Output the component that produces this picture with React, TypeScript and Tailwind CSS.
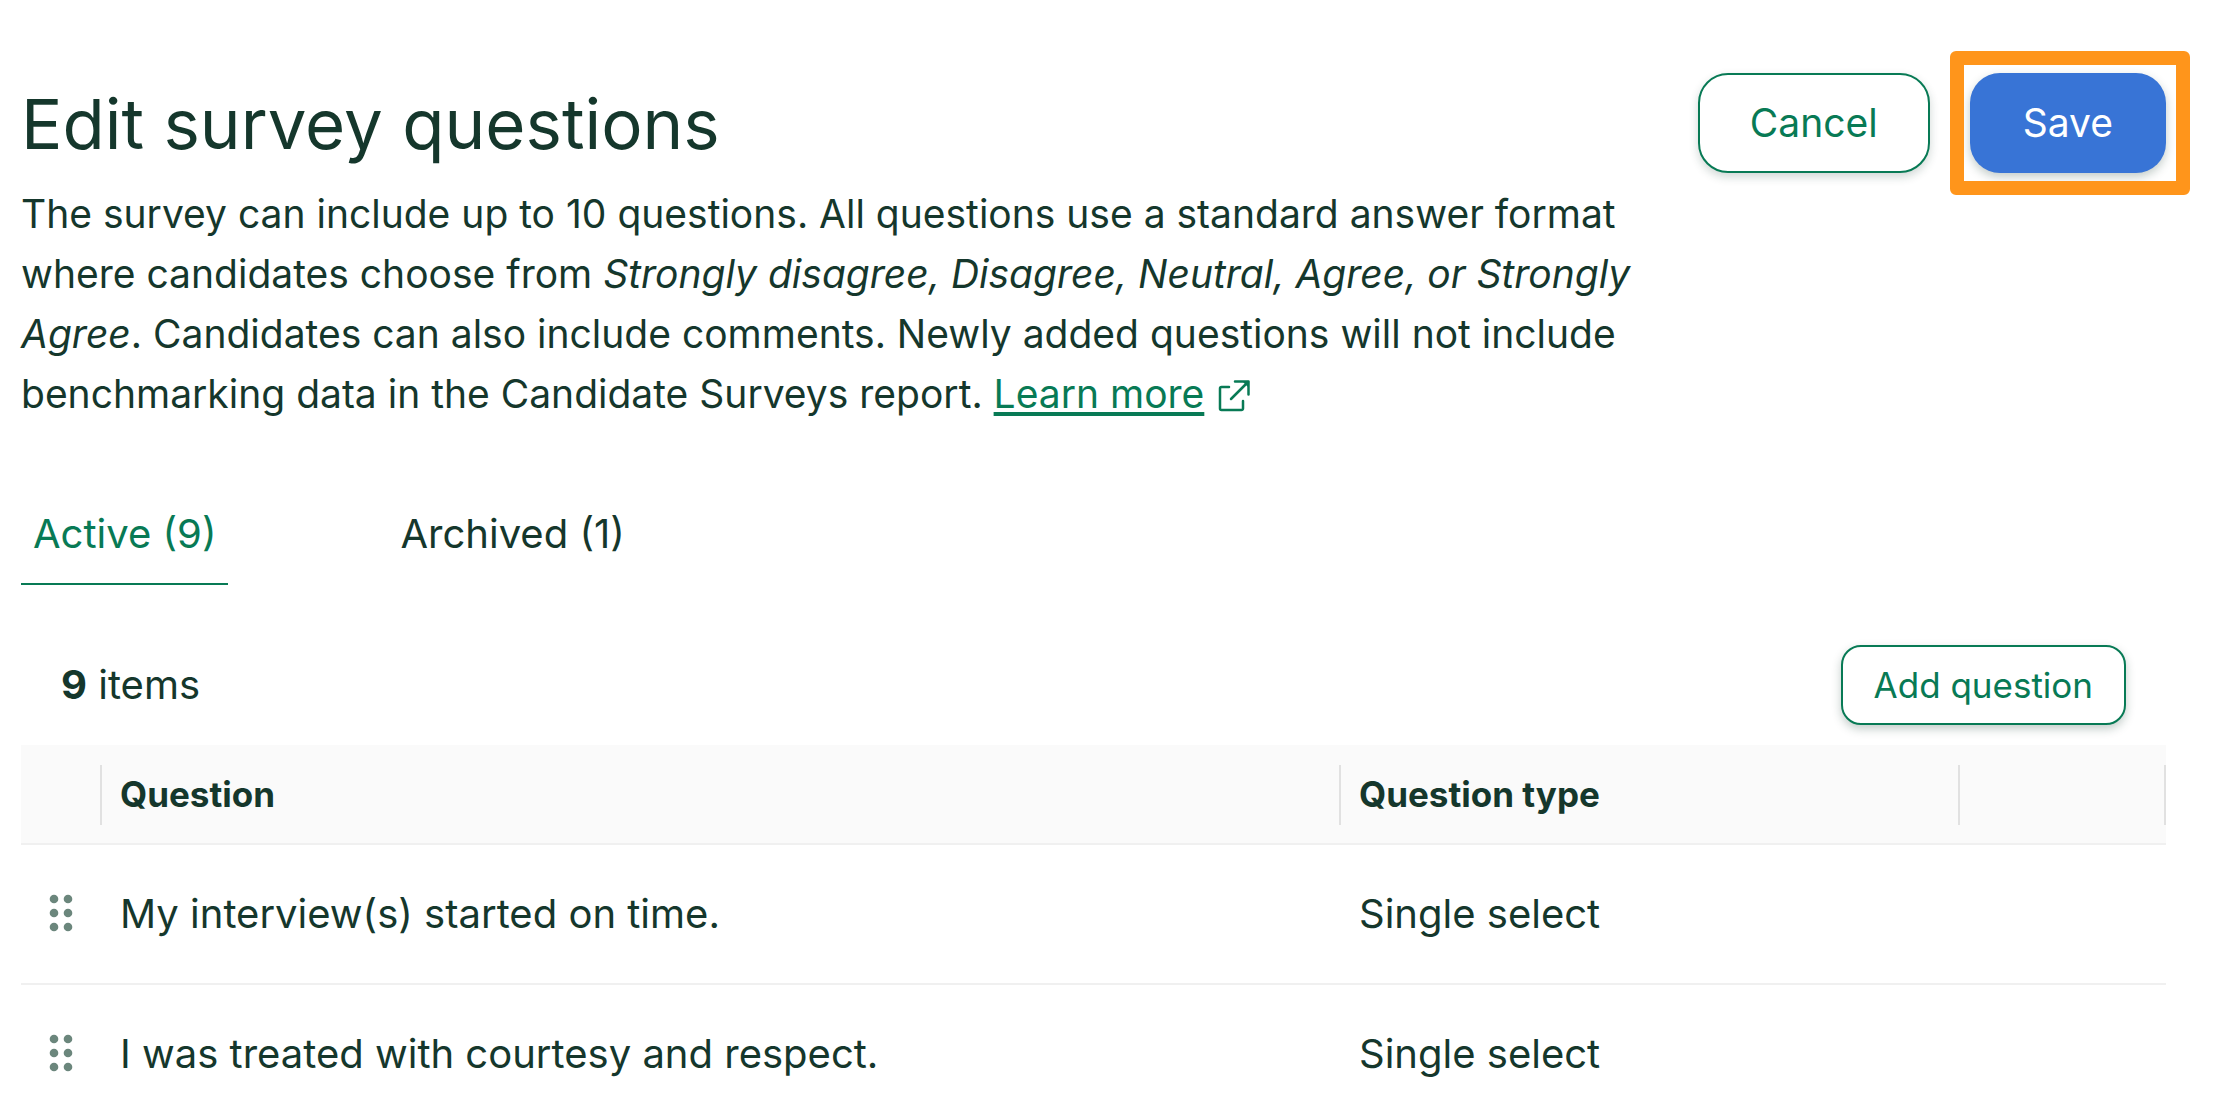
import { useState } from "react";

const questions = [
  { text: "My interview(s) started on time.", type: "Single select" },
  { text: "I was treated with courtesy and respect.", type: "Single select" },
];

function ExternalIcon() {
  return (
    <svg
      className="ml-3.5 inline-block size-8 align-[-4px]"
      viewBox="0 0 32 32"
      fill="none"
      stroke="currentColor"
      strokeWidth="2.5"
      strokeLinecap="round"
      strokeLinejoin="round"
      aria-hidden="true"
    >
      <path d="M11 7H3.500a1.500 1.500 0 0 0-1.500 1.500V28.500a1.500 1.500 0 0 0 1.500 1.500H23.500a1.500 1.500 0 0 0 1.500-1.500V21" />
      <path d="M13 19 30 2" />
      <path d="M17 1.500H30.500V14.500" />
      <path d="M25 2H30V7Z" fill="currentColor" stroke="none" />
    </svg>
  );
}

function DragHandle() {
  return (
    <svg className="block h-10 w-6" viewBox="0 0 24 40" fill="#6b867c" aria-hidden="true">
      {[5, 19, 33].map((y) => (
        <g key={y}>
          <circle cx="5" cy={y} r="4.300" />
          <circle cx="19" cy={y} r="4.300" />
        </g>
      ))}
    </svg>
  );
}

function Divider() {
  return <span className="absolute top-5 right-0 h-15 w-0.5 bg-[#e1e1e1]" />;
}

export default function App() {
  const [tab, setTab] = useState("active");
  const tabs = [
    { id: "active", label: "Active (9)" },
    { id: "archived", label: "Archived (1)" },
  ];

  return (
    <main className="h-screen overflow-hidden bg-white pt-[73px] pr-[62px] pl-[21px] font-[Inter,'Liberation_Sans',sans-serif] text-[40px] leading-[60px] text-[#15372c]">
      <header className="flex items-start justify-between text-[39px]">
        <div className="max-w-[1650px]">
          <h1 className="pt-[7px] text-[69px] leading-[88px]">Edit survey questions</h1>
          <p className="pt-4">
            The survey can include up to 10 questions. All questions use a standard answer format where candidates
            choose from <em>Strongly disagree, Disagree, Neutral, Agree, or Strongly Agree</em>. Candidates can also
            include comments. Newly added questions will not include benchmarking data in the Candidate Surveys report.{" "}
            <a href="#learn-more" className="whitespace-nowrap text-[#087a55]">
              <span className="underline decoration-[4px] underline-offset-[4px]">Learn more</span>
              <ExternalIcon />
            </a>
          </p>
        </div>
        <div className="flex shrink-0 gap-10">
          <button
            type="button"
            className="h-[100px] rounded-[30px] border-2 border-[#087a55] bg-white px-[50px] text-[#087a55] shadow-[0_4px_10px_rgba(21,55,44,0.2)]"
          >
            Cancel
          </button>
          <div className="relative">
            <button
              type="button"
              className="h-[100px] rounded-[30px] bg-[#3874d6] px-[53px] text-white shadow-[0_4px_10px_rgba(21,55,44,0.25)]"
            >
              Save
            </button>
            <span className="pointer-events-none absolute -top-[22px] -right-[24px] -bottom-[22px] -left-[20px] rounded-[6px] border-[14px] border-[#ff951b]" />
          </div>
        </div>
      </header>

      <div role="tablist" className="mt-[79px] flex gap-40">
        {tabs.map((t) => (
          <button
            key={t.id}
            type="button"
            role="tab"
            aria-selected={tab === t.id}
            onClick={() => setTab(t.id)}
            className={
              tab === t.id
                ? "h-[82px] border-b-2 border-[#087a55] px-3 pb-[18px] text-[#087a55]"
                : "h-[82px] border-b-2 border-transparent px-3 pb-[18px]"
            }
          >
            {t.label}
          </button>
        ))}
      </div>

      <div className="mt-[60px] flex items-center justify-between pr-10 pl-10">
        <p>
          <strong>9</strong> items
        </p>
        <button
          type="button"
          className="h-20 rounded-[20px] border-2 border-[#087a55] bg-white px-[31px] text-[35px] text-[#087a55] shadow-[0_4px_10px_rgba(21,55,44,0.25)]"
        >
          Add question
        </button>
      </div>

      <table className="mt-5 w-full table-fixed border-separate border-spacing-0 text-left">
        <colgroup>
          <col className="w-[81px]" />
          <col />
          <col className="w-[619px]" />
          <col className="w-[206px]" />
        </colgroup>
        <thead className="bg-[#fafafa] text-[35px]">
          <tr className="h-[100px]">
            <th className="relative border-b-2 border-[#f0f0f0]">
              <Divider />
            </th>
            <th className="relative border-b-2 border-[#f0f0f0] pl-[18px] font-bold">
              Question
              <Divider />
            </th>
            <th className="relative border-b-2 border-[#f0f0f0] pl-[18px] font-bold">
              Question type
              <Divider />
            </th>
            <th className="relative border-b-2 border-[#f0f0f0]">
              <Divider />
            </th>
          </tr>
        </thead>
        <tbody>
          {questions.map((q) => (
            <tr key={q.text} className="h-[140px]">
              <td className="border-b-2 border-[#f0f0f0] pl-7">
                <DragHandle />
              </td>
              <td className="border-b-2 border-[#f0f0f0] pl-[18px]">{q.text}</td>
              <td className="border-b-2 border-[#f0f0f0] pl-[18px]">{q.type}</td>
              <td className="border-b-2 border-[#f0f0f0]" />
            </tr>
          ))}
        </tbody>
      </table>
    </main>
  );
}
